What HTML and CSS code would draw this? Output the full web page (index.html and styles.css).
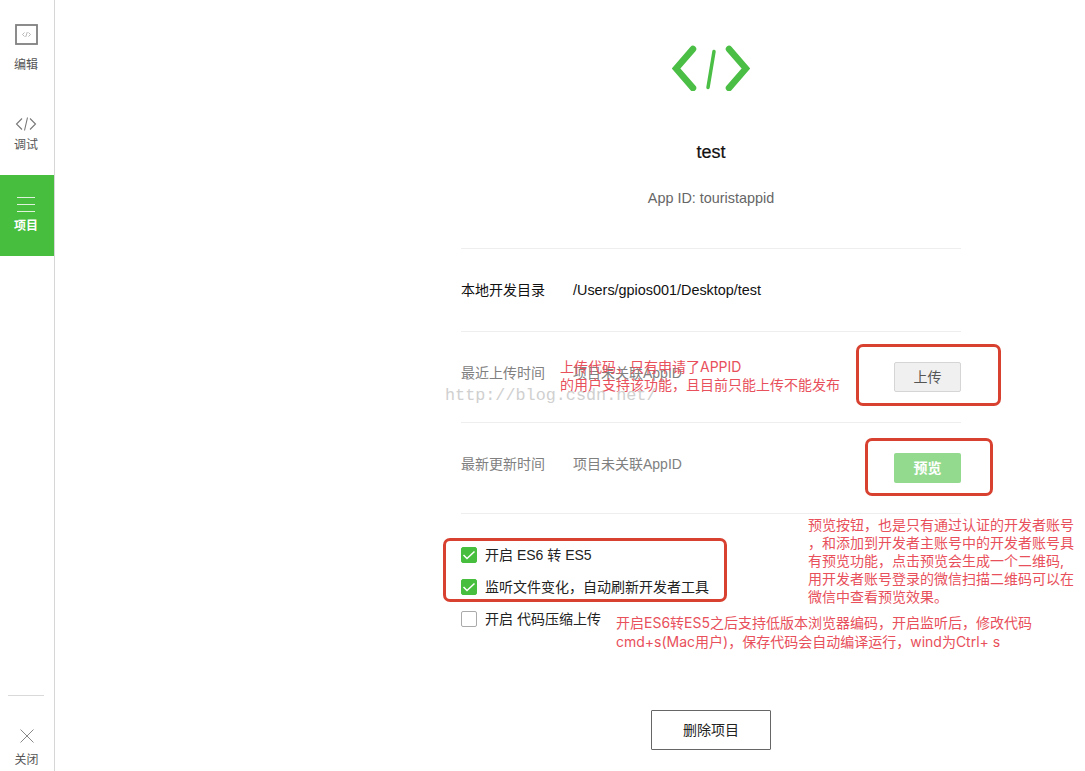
FILE: index.html
```html
<!DOCTYPE html>
<html lang="zh">
<head>
<meta charset="utf-8">
<title>test</title>
<link rel="stylesheet" href="styles.css">
</head>
<body>
<div class="app">
  <nav class="sidebar">
    <a class="nav-item nav-edit">
      <svg class="nav-icon" width="23" height="21" viewBox="0 0 23 21" fill="none">
        <rect x="1" y="1" width="21" height="19" fill="#fff" stroke="#808080" stroke-width="1.800"/>
        <path d="M9.500 8.500 7.500 10.500l2 2M13.500 8.500l2 2-2 2M12.300 8l-1.600 5" stroke="#999" stroke-width=".7"/>
      </svg>
      <span>编辑</span>
    </a>
    <a class="nav-item nav-debug">
      <svg class="nav-icon" width="22" height="14" viewBox="0 0 22 14" fill="none">
        <path d="M7 1.500 1.500 7 7 12.500M15 1.500 20.500 7 15 12.500M12.500 .5 9.500 13.500" stroke="#777" stroke-width="1.100"/>
      </svg>
      <span>调试</span>
    </a>
    <a class="nav-item nav-project">
      <svg class="nav-icon" width="18" height="15" viewBox="0 0 18 15" fill="none">
        <path d="M0 .5h18M0 7.500h18M0 14.500h18" stroke="#dff3dc" stroke-width="1"/>
      </svg>
      <span>项目</span>
    </a>
    <div class="nav-bottom">
      <a class="nav-item nav-close">
        <svg class="nav-icon" width="14" height="14" viewBox="0 0 14 14" fill="none">
          <path d="M.5.500l13 13M13.500.500l-13 13" stroke="#888" stroke-width="1"/>
        </svg>
        <span>关闭</span>
      </a>
    </div>
  </nav>

  <main class="main">
    <section class="project">
      <header class="hero">
        <svg class="logo" width="78" height="46" viewBox="0 0 78 46" fill="none">
          <path d="M21 4 4 23.500 21 43M57 4l17 19.500L57 43" stroke="#4bbf45" stroke-width="6.500" stroke-linecap="round"/>
          <path d="M42 6.500 36 42.500" stroke="#4bbf45" stroke-width="3.500" stroke-linecap="round"/>
        </svg>
        <h1 class="title">test</h1>
        <p class="appid">App ID: touristappid</p>
      </header>

      <div class="row row-dir">
        <span class="row-label">本地开发目录</span>
        <span class="row-value">/Users/gpios001/Desktop/test</span>
      </div>
      <div class="row row-upload is-muted">
        <span class="row-label">最近上传时间</span>
        <span class="row-value">项目未关联AppID</span>
        <button class="btn btn-upload">上传</button>
      </div>
      <div class="row row-preview is-muted">
        <span class="row-label">最新更新时间</span>
        <span class="row-value">项目未关联AppID</span>
        <button class="btn btn-preview">预览</button>
      </div>

      <ul class="options">
        <li class="option"><span class="check is-on"><svg width="14" height="12" viewBox="0 0 14 12" fill="none"><path d="M1.500 6l3.500 3.500 7.500-7" stroke="#fff" stroke-width="1.500"/></svg></span><span class="option-text">开启 ES6 转 ES5</span></li>
        <li class="option"><span class="check is-on"><svg width="14" height="12" viewBox="0 0 14 12" fill="none"><path d="M1.500 6l3.500 3.500 7.500-7" stroke="#fff" stroke-width="1.500"/></svg></span><span class="option-text">监听文件变化，自动刷新开发者工具</span></li>
        <li class="option"><span class="check"></span><span class="option-text">开启 代码压缩上传</span></li>
      </ul>

      <button class="btn-delete">删除项目</button>
    </section>
  </main>
</div>

<div class="mark mark-upload"></div>
<div class="mark mark-preview"></div>
<div class="mark mark-options"></div>

<p class="note note-upload">上传代码，只有申请了APPID<br>的用户支持该功能，且目前只能上传不能发布</p>
<p class="note note-preview">预览按钮，也是只有通过认证的开发者账号<br>，和添加到开发者主账号中的开发者账号具<br>有预览功能，点击预览会生成一个二维码,<br>用开发者账号登录的微信扫描二维码可以在<br>微信中查看预览效果。</p>
<p class="note note-options">开启ES6转ES5之后支持低版本浏览器编码，开启监听后，修改代码<br>cmd+s(Mac用户)，保存代码会自动编译运行，wind为Ctrl+ s</p>
<p class="watermark">http://blog.csdn.net/</p>
</body>
</html>
```

FILE: styles.css
```css
* { box-sizing: border-box; }

html, body {
  margin: 0;
  height: 771px;
  overflow: hidden;
  background: #fff;
  color: #111;
  font-family: "Liberation Sans", "Noto Sans CJK SC", sans-serif;
  font-size: 14px;
}

.app {
  display: flex;
  height: 771px;
}

/* Sidebar */
.sidebar {
  width: 55px;
  flex: none;
  display: flex;
  flex-direction: column;
  border-right: 1px solid #d6d6d6;
  background: #fff;
}

.nav-item {
  display: flex;
  flex-direction: column;
  align-items: center;
  padding-right: 2px;
  font-size: 12px;
  line-height: 16px;
  color: #555;
}

.nav-edit { height: 94px; padding-top: 24px; }
.nav-edit .nav-icon { margin-bottom: 12px; }
.nav-debug { height: 81px; padding-top: 23px; }
.nav-debug .nav-icon { margin-bottom: 6px; }

.nav-project {
  height: 81px;
  padding-top: 22px;
  background: #48be3e;
  color: #fff;
  font-weight: 700;
}
.nav-project .nav-icon { margin-bottom: 6px; }

.nav-bottom {
  margin: auto 10px 0 8px;
  border-top: 1px solid #d9d9d9;
  height: 76px;
  padding-top: 33px;
}
.nav-close { width: 37px; padding-right: 0; }
.nav-close .nav-icon { margin-bottom: 9px; }

/* Main column */
.main { flex: 1; padding-left: 406px; }
.project { width: 500px; }

.hero {
  display: flex;
  flex-direction: column;
  align-items: center;
  height: 248px;
  padding-top: 45px;
  color: #111;
}
.logo { display: block; }
.title {
  margin: 50px 0 0;
  font-size: 18px;
  font-weight: 400;
  line-height: 22px;
  -webkit-text-stroke: .2px #111;
}
.appid {
  margin: 26px 0 0;
  font-size: 14.400px;
  line-height: 18px;
  color: #666;
}

.row {
  display: flex;
  align-items: center;
  height: 83px;
  border-top: 1px solid #eee;
  color: #111;
}
.row-upload { height: 91px; }
.row-preview { border-bottom: 1px solid #eee; height: 92px; }
.row-label { width: 112px; flex: none; padding-bottom: 2px; }
.row-dir .row-value { font-size: 14.400px; }
.is-muted { color: #808080; }
.is-muted .row-label { padding-bottom: 10px; }
.is-muted .row-value { padding-bottom: 10px; }

.btn {
  margin-left: auto;
  width: 67px;
  height: 30px;
  border-radius: 2px;
  font: inherit;
  padding: 0 0 2px;
}
.btn-upload {
  border: 1px solid #d5d5d5;
  background: #f0f0f0;
  color: #555;
}
.btn-preview {
  border: 0;
  background: #94da8e;
  color: #fff;
  font-weight: 700;
}

.options {
  list-style: none;
  margin: 25px 0 0;
  padding: 0;
}
.option {
  display: flex;
  align-items: center;
  height: 32px;
  color: #222;
}
.option-text { margin-bottom: 3px; }
.check {
  width: 16px;
  height: 16px;
  margin-right: 8px;
  display: flex;
  align-items: center;
  justify-content: center;
  border: 1px solid #aaa;
  border-radius: 2px;
  background: #fff;
}
.check.is-on { background: #48be3e; border-color: #48be3e; }

.btn-delete {
  display: block;
  margin: 75px 0 0 190px;
  width: 120px;
  height: 40px;
  border: 1px solid #666;
  border-radius: 1px;
  background: #fff;
  color: #222;
  font: inherit;
  padding: 0 0 2px;
}

/* Annotations drawn over the screenshot */
.mark {
  position: absolute;
  border: 3px solid #d8402f;
  border-radius: 7px;
}
.mark-upload { left: 856px; top: 344px; width: 145px; height: 62px; }
.mark-preview { left: 865px; top: 438px; width: 128px; height: 58px; }
.mark-options { left: 443px; top: 538px; width: 284px; height: 64px; }

.note {
  position: absolute;
  margin: 0;
  color: #e8505b;
  font-family: "Inter", "Noto Sans CJK SC", sans-serif;
  font-size: 14px;
  white-space: nowrap;
}
.note-upload { left: 560px; top: 358px; line-height: 18px; }
.note-preview { left: 808px; top: 516px; line-height: 18px; }
.note-options { left: 616px; top: 613px; line-height: 19px; font-size: 14px; }

.watermark {
  position: absolute;
  left: 445px;
  top: 386px;
  margin: 0;
  font-family: "Liberation Mono", monospace;
  font-size: 16.800px;
  line-height: 20px;
  color: #d0d0d0;
}
```
